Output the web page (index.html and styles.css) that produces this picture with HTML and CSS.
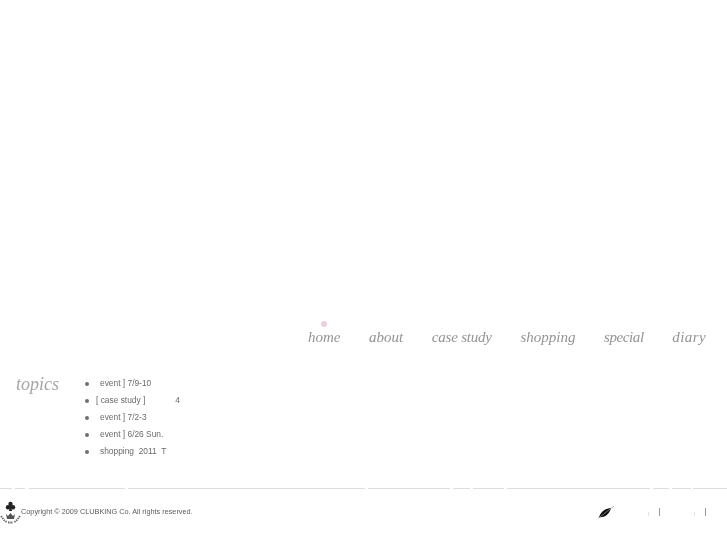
FILE: index.html
```html
<!DOCTYPE html>
<html lang="en">
<head>
<meta charset="utf-8">
<title>CLUBKING</title>
<link rel="stylesheet" href="styles.css">
</head>
<body>
<div class="hero"></div>
<nav class="nav">
  <a class="nav-item nav-current">home<span class="nav-dot"></span></a>
  <a class="nav-item">about</a>
  <a class="nav-item nav-tight">case study</a>
  <a class="nav-item">shopping</a>
  <a class="nav-item nav-tighter">special</a>
  <a class="nav-item nav-loose">diary</a>
</nav>
<section class="topics">
  <h2 class="topics-title">topics</h2>
  <ul class="topics-list">
    <li class="topic">event ] 7/9-10</li>
    <li class="topic topic-wide"><span>[ case study ]</span><span>4</span></li>
    <li class="topic">event ] 7/2-3</li>
    <li class="topic">event ] 6/26 Sun.</li>
    <li class="topic">shopping&nbsp; 2011&nbsp; T</li>
  </ul>
</section>
<svg class="rule" width="727" height="1" viewBox="0 0 727 1" aria-hidden="true">
  <path d="M0 .5H12M15 .5H25M29 .5H125M128 .5H365M368 .5H450M453 .5H470M473 .5H504M507 .5H650M653 .5H669M672 .5H691M693 .5H727"/>
</svg>
<footer class="footer">
  <div class="brand">
    <svg class="crest" width="21" height="24" viewBox="0 0 21 24" aria-hidden="true">
      <circle cx="10.5" cy="3" r="2.2"/>
      <circle cx="8" cy="6.3" r="2.2"/>
      <circle cx="13" cy="6.3" r="2.2"/>
      <path d="M10 5h1l1 5H9z"/>
      <path class="crest-crown" d="M6 13l2 2 2.500-3 2.500 3 2-2-1 5H7z"/>
      <path class="crest-arc" d="M1 15l3 4 3 2.500M20 15l-3 4-3 2.500M8 21.500h5"/>
    </svg>
    <span class="copyright">Copyright © 2009 CLUBKING Co. All rights reserved.</span>
  </div>
  <div class="links">
    <svg class="leaf" width="17" height="14" viewBox="0 0 17 14" aria-hidden="true">
      <path class="leaf-body" d="M1 12.500C2 8 6 3.500 13 3c-1 4-4 8.500-9 9z"/>
      <path class="leaf-stem" d="M0 13.500L16 1"/>
    </svg>
    <span class="sep sep-faint sep-a"></span>
    <span class="sep sep-b"></span>
    <span class="sep sep-faint sep-c"></span>
    <span class="sep sep-d"></span>
  </div>
</footer>
</body>
</html>
```

FILE: styles.css
```css
* { box-sizing: border-box; }
html, body { margin: 0; padding: 0; background: #fff; }
body { width: 727px; height: 545px; overflow: hidden; font-family: "Liberation Sans", Arial, sans-serif; }
.hero { height: 325px; }
.nav { display: flex; justify-content: flex-end; gap: 28.6px; padding-right: 21px; height: 32px; align-items: flex-start; }
.nav-item { position: relative; font-family: "Liberation Serif", serif; font-style: italic; font-size: 15px; line-height: 24px; color: #949494; will-change: opacity; }
.nav-tight { letter-spacing: -.2px; }
.nav-tighter { letter-spacing: -.4px; }
.nav-loose { letter-spacing: .4px; }
.nav-dot { position: absolute; left: 13px; top: -4px; width: 6px; height: 6px; border-radius: 50%; background: #ecd0da; }
.topics { display: flex; height: 131px; padding: 15px 0 0 16px; }
.topics-title { margin: 0; width: 71px; font-family: "Liberation Serif", serif; font-style: italic; font-weight: normal; font-size: 18px; line-height: 24px; color: #a6a6a6; will-change: opacity; }
.topics-list { margin: 0; padding: 3px 0 0; list-style: none; will-change: opacity; }
.topic { position: relative; width: 93px; height: 17px; padding-left: 13px; font-size: 8.4px; line-height: 17px; color: #6a6a6a; white-space: nowrap; }
.topic::before { content: ""; position: absolute; left: -2px; top: 7px; width: 4px; height: 4px; border-radius: 50%; background: #707070; }
.topic-wide { display: flex; justify-content: space-between; padding-left: 9px; }
.rule { display: block; }
.rule path { stroke: #dedede; stroke-width: 1; fill: none; }
.footer { display: flex; justify-content: space-between; align-items: flex-start; height: 56px; }
.brand { display: flex; align-items: center; margin-top: 12px; }
.crest { fill: #222; }
.crest-crown { fill: #555; }
.crest-arc { fill: none; stroke: #666; stroke-width: 1.800; stroke-dasharray: 1.500 .8; }
.copyright { margin-bottom: 4px; font-size: 7.3px; color: #5c5c5c; white-space: nowrap; will-change: opacity; }
.links { position: relative; width: 129px; height: 36px; }
.leaf { position: absolute; left: 0; top: 16px; }
.leaf-body { fill: #111; }
.leaf-stem { stroke: #999; stroke-width: .7; fill: none; }
.sep { position: absolute; top: 19px; width: 1px; height: 8px; background: #999; }
.sep-faint { top: 23px; height: 4px; background: #e4e4e4; }
.sep-a { left: 50px; }
.sep-b { left: 61px; }
.sep-c { left: 96px; }
.sep-d { left: 107px; }
```
